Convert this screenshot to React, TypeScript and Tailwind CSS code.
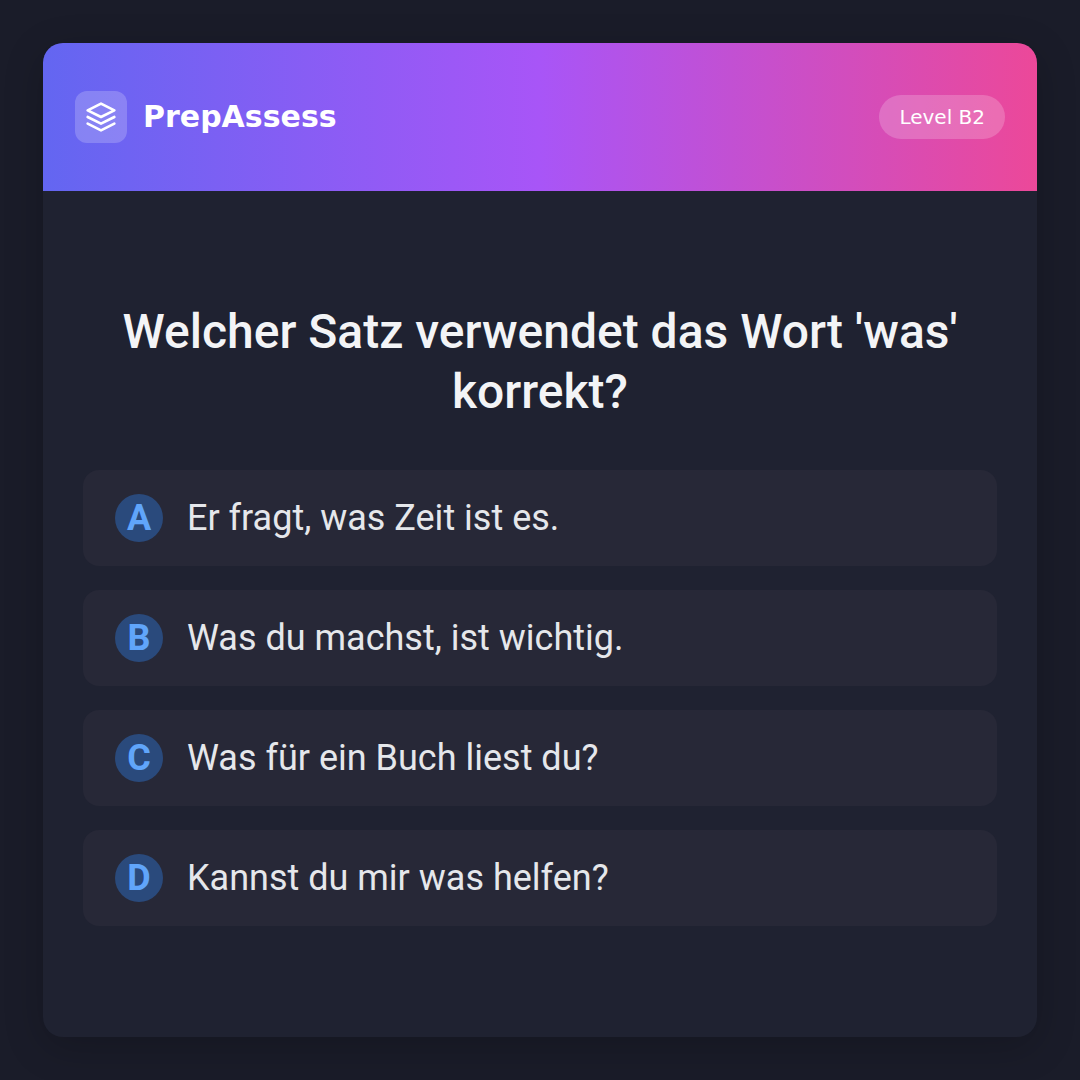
const options = [
  { letter: "A", text: "Er fragt, was Zeit ist es." },
  { letter: "B", text: "Was du machst, ist wichtig." },
  { letter: "C", text: "Was für ein Buch liest du?" },
  { letter: "D", text: "Kannst du mir was helfen?" },
];

function Logo() {
  return (
    <div className="flex h-[52px] w-[52px] items-center justify-center rounded-xl bg-white/20">
      <svg width="32" height="32" viewBox="0 0 24 24" fill="none" stroke="white" strokeWidth="2" strokeLinecap="round" strokeLinejoin="round">
        <path d="M12 2L2 7l10 5 10-5-10-5z" />
        <path d="M2 17l10 5 10-5" />
        <path d="M2 12l10 5 10-5" />
      </svg>
    </div>
  );
}

export default function App() {
  return (
    <div className="flex h-[1080px] w-[1080px] items-center justify-center bg-[#1a1c29] font-[Roboto,sans-serif]">
      <div className="flex h-[994px] w-[994px] flex-col overflow-hidden rounded-[20px] bg-[#1f2231] shadow-[0_10px_40px_rgba(0,0,0,0.2)]">
        <header className="flex h-[148px] items-center justify-between bg-[linear-gradient(90deg,#6366f1,#a855f7,#ec4899)] px-8 font-['DejaVu_Sans',sans-serif] text-white">
          <div className="flex items-center gap-4">
            <Logo />
            <span className="text-[30px] font-bold leading-9">PrepAssess</span>
          </div>
          <span className="flex h-11 items-center rounded-full bg-white/20 px-5 text-[20px]">Level B2</span>
        </header>
        <main className="flex flex-1 flex-col justify-center px-10">
          <h1 className="mb-12 text-center text-[48px] font-medium leading-[60px] text-gray-100">Welcher Satz verwendet das Wort 'was' korrekt?</h1>
          <div className="flex flex-col gap-6">
            {options.map((o) => (
              <div key={o.letter} className="flex h-24 items-center gap-6 rounded-2xl bg-[#272837] px-8">
                <span className="flex h-12 w-12 items-center justify-center rounded-full bg-[#2a4a7c] text-[36px] font-bold text-[#60a5fa]">{o.letter}</span>
                <span className="text-[36px] text-gray-200">{o.text}</span>
              </div>
            ))}
          </div>
        </main>
      </div>
    </div>
  );
}
